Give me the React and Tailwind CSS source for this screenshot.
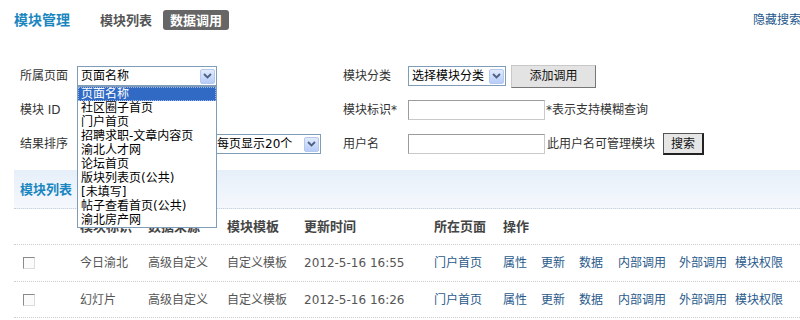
import React from "react";

function Arrow() {
  return (
    <div className="w-[15px] h-[15px] rounded-[2px] border border-[#b5c8ee] bg-linear-to-b from-[#e2ebfd] to-[#b7ccf7] flex items-center justify-center shrink-0">
      <svg width="9" height="6" viewBox="0 0 9 6">
        <path d="M1 1 L4.5 4.5 L8 1" stroke="#4d6185" strokeWidth="1.8" fill="none" />
      </svg>
    </div>
  );
}

function Select({ w, text }) {
  return (
    <div className={`${w} h-[20px] border border-[#7f9db9] bg-white flex items-center justify-between pl-[3px] pr-[1px] text-[12px] text-[#000] shrink-0`}>
      <span className="leading-none whitespace-nowrap">{text}</span>
      <Arrow />
    </div>
  );
}

function Input() {
  return (
    <div className="w-[137px] h-[20px] bg-white border border-t-[#9c9c9c] border-l-[#9c9c9c] border-r-[#c9c9c9] border-b-[#c9c9c9] shrink-0" />
  );
}

function Checkbox() {
  return (
    <div className="w-[12px] h-[12px] border border-t-[#8a8a8a] border-l-[#8a8a8a] border-r-[#dcdcdc] border-b-[#dcdcdc] bg-[#fbfbfb]" />
  );
}

const items = [
  "页面名称",
  "社区圈子首页",
  "门户首页",
  "招聘求职-文章内容页",
  "渝北人才网",
  "论坛首页",
  "版块列表页(公共)",
  "[未填写]",
  "帖子查看首页(公共)",
  "渝北房产网",
];

const rows = [
  { name: "今日渝北", time: "2012-5-16 16:55" },
  { name: "幻灯片", time: "2012-5-16 16:26" },
];

function Ops() {
  const link = "text-[#2a5a8c] text-[12px] whitespace-nowrap";
  return (
    <div className="flex items-center">
      <span className={`${link} w-[38px]`}>属性</span>
      <span className={`${link} w-[38px]`}>更新</span>
      <span className={`${link} w-[39px]`}>数据</span>
      <span className={`${link} w-[61px]`}>内部调用</span>
      <span className={`${link} w-[56px]`}>外部调用</span>
      <span className={link}>模块权限</span>
    </div>
  );
}

export default function App() {
  return (
    <div className="relative w-[800px] h-[320px] overflow-hidden bg-white font-['DejaVu_Sans','Noto_Sans_CJK_SC',sans-serif] text-[#333]">
      {/* header */}
      <div className="flex items-center h-[40px] pl-[14px]">
        <span className="text-[14px] font-bold text-[#1a86c0] leading-none">模块管理</span>
        <span className="ml-[30px] text-[13px] font-bold text-[#555] leading-none">模块列表</span>
        <span className="ml-[11px] h-[20px] px-[7px] rounded-[3px] bg-[#666] text-white text-[13px] font-bold flex items-center leading-none">数据调用</span>
        <span className="ml-auto mr-[-1px] text-[12px] text-[#24578a] leading-none">隐藏搜索</span>
      </div>

      {/* form */}
      <div className="flex flex-col mt-[19px] text-[12px]">
        <div className="flex h-[34px] items-center">
          <div className="w-[343px] flex items-center pl-[20px]">
            <span className="w-[57px]">所属页面</span>
            <Select w="w-[140px]" text="页面名称" />
          </div>
          <div className="flex items-center">
            <span className="w-[65px]">模块分类</span>
            <Select w="w-[98px]" text="选择模块分类" />
            <div className="ml-[5px] w-[85px] h-[23px] flex items-center justify-center bg-[#e3e3e3] border border-t-[#c8c8c8] border-l-[#c8c8c8] border-r-[#777] border-b-[#777] text-[12px] text-[#111]">
              添加调用
            </div>
          </div>
        </div>

        <div className="flex h-[34px] items-center">
          <div className="w-[343px] flex items-center pl-[20px]">
            <span className="w-[57px]">模块 ID</span>
            <Input />
          </div>
          <div className="flex items-center">
            <span className="w-[65px]">模块标识*</span>
            <Input />
            <span className="ml-[1px]">*表示支持模糊查询</span>
          </div>
        </div>

        <div className="flex h-[34px] items-center">
          <div className="w-[343px] flex items-center pl-[20px]">
            <span className="w-[57px]">结果排序</span>
            <Select w="w-[133px]" text="" />
            <div className="ml-[3px]">
              <Select w="w-[108px]" text="每页显示20个" />
            </div>
          </div>
          <div className="flex items-center">
            <span className="w-[65px]">用户名</span>
            <Input />
            <span className="ml-[2px]">此用户名可管理模块</span>
            <div className="ml-[8px] w-[41px] h-[22px] flex items-center justify-center bg-[#e6e6e6] border border-[#555] border-r-2 border-b-2 border-r-[#222] border-b-[#222] text-[12px] text-[#111]">
              搜索
            </div>
          </div>
        </div>
      </div>

      {/* list bar */}
      <div className="mt-[9px] ml-[14px] h-[39px] flex items-center pl-[6px] bg-linear-to-b from-[#e6eff9] to-[#f5f8fd] border-b border-dotted border-[#c8d0d8]">
        <span className="text-[13px] font-bold text-[#1a86c0] leading-none">模块列表</span>
      </div>

      {/* table header */}
      <div className="ml-[14px] h-[36px] flex items-center border-b border-dotted border-[#ccc] text-[13px] font-bold text-[#444]">
        <span className="w-[66px]" />
        <span className="w-[68px]">模块标识</span>
        <span className="w-[79px]">数据来源</span>
        <span className="w-[77px]">模块模板</span>
        <span className="w-[130px]">更新时间</span>
        <span className="w-[69px]">所在页面</span>
        <span>操作</span>
      </div>

      {rows.map((r, i) => (
        <div
          key={i}
          className={`ml-[14px] ${i === 0 ? "h-[37px]" : "h-[36px]"} flex items-center border-b border-dotted border-[#ccc] text-[12px] text-[#555]`}
        >
          <div className="w-[66px] pl-[9px]">
            <Checkbox />
          </div>
          <span className="w-[68px]">{r.name}</span>
          <span className="w-[79px]">高级自定义</span>
          <span className="w-[77px]">自定义模板</span>
          <span className="w-[130px]">{r.time}</span>
          <span className="w-[69px] text-[#2a5a8c]">门户首页</span>
          <Ops />
        </div>
      ))}

      {/* open dropdown list */}
      <div className="absolute left-[77px] top-[86px] w-[140px] border border-[#7f9db9] bg-white z-10">
        {items.map((t, i) => (
          <div
            key={i}
            className={`h-[14px] leading-[14px] pl-[3px] text-[12px] whitespace-nowrap ${
              i === 0
                ? "bg-[#316ac5] text-white outline outline-1 outline-dotted outline-[#9db5e5] -outline-offset-1"
                : "text-[#000]"
            }`}
          >
            {t}
          </div>
        ))}
      </div>
    </div>
  );
}
